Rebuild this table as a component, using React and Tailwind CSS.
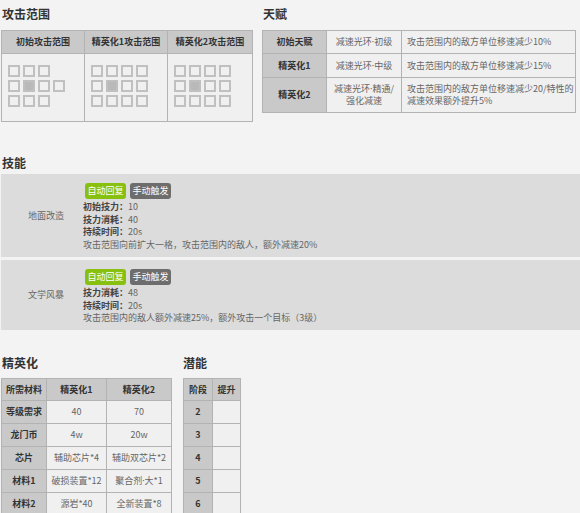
import React from 'react';

const font = { fontFamily: '"Noto Sans CJK SC", "Noto Sans", sans-serif' };

const ranges = [
  { title: '初始攻击范围', rows: ['000 ', '0100', '000 '] },
  { title: '精英化1攻击范围', rows: ['0000', '0100', '0000'] },
  { title: '精英化2攻击范围', rows: ['0000', '0100', '0000'] },
];

const talents = [
  { stage: '初始天赋', name: [['减速光环', '初级']], desc: ['攻击范围内的敌方单位移速减少10%'], h: 'h-[23px]' },
  { stage: '精英化1', name: [['减速光环', '中级']], desc: ['攻击范围内的敌方单位移速减少15%'], h: 'h-[24px]' },
  { stage: '精英化2', name: [['减速光环', '精通/'], ['强化减速']], desc: ['攻击范围内的敌方单位移速减少20/特性的', '减速效果额外提升5%'], h: 'h-[35px]' },
];

const skills = [
  {
    name: '地面改造',
    stats: [['初始技力：', '10'], ['技力消耗：', '40'], ['持续时间：', '20s']],
    desc: '攻击范围向前扩大一格，攻击范围内的敌人，额外减速20%',
    h: 'h-[83px]',
  },
  {
    name: '文学风暴',
    stats: [['技力消耗：', '48'], ['持续时间：', '20s']],
    desc: '攻击范围内的敌人额外减速25%，额外攻击一个目标（3级）',
    h: 'h-[70px]',
  },
];

const elite = [
  ['等级需求', '40', '70'],
  ['龙门币', '4w', '20w'],
  ['芯片', '辅助芯片*4', '辅助双芯片*2'],
  ['材料1', '破损装置*12', ['聚合剂', '大*1']],
  ['材料2', '源岩*40', '全新装置*8'],
];

const cell = 'border border-[#b3b3b3] p-0 text-center align-middle';
const head = `${cell} bg-[#c9c9c9] font-bold text-[#333]`;
const body = `${cell} bg-[#f0f0f0] text-[#666]`;

// narrow latin middle dot, the CJK one renders full width
const Dotted = ({ parts }) =>
  Array.isArray(parts) ? (
    <>
      {parts[0]}
      {parts.length > 1 && <span style={{ fontFamily: '"Noto Sans", sans-serif' }}>·</span>}
      {parts[1]}
    </>
  ) : (
    parts
  );

const Grid = ({ rows }) => (
  <div className="flex flex-col gap-[3px]">
    {rows.map((r, i) => (
      <div key={i} className="flex gap-[3px]">
        {r.split('').map((c, j) =>
          c === ' ' ? (
            <div key={j} className="w-[12px] h-[12px]" />
          ) : (
            <div
              key={j}
              className={`w-[12px] h-[12px] border-2 border-[#c0c0c0] ${c === '1' ? 'bg-[#b9b9b9]' : ''}`}
            />
          )
        )}
      </div>
    ))}
  </div>
);

const Heading = ({ children, className = '' }) => (
  <div className={`text-[12px] leading-[15px] font-bold text-[#333] ${className}`}>{children}</div>
);

export default function App() {
  return (
    <div className="w-[580px] h-[513px] bg-[#f3f3f3] overflow-hidden text-[9px]" style={font}>
      <div className="flex">
        <div className="ml-[1px] w-[251px]">
          <Heading className="h-[30px] pt-[6px] pl-[1px]">攻击范围</Heading>
          <table className="table-fixed border-collapse w-[251px]">
            <colgroup>
              <col className="w-[83px]" />
              <col className="w-[83px]" />
              <col className="w-[85px]" />
            </colgroup>
            <tbody>
              <tr className="h-[23px]">
                {ranges.map(r => (
                  <td key={r.title} className={head}>{r.title}</td>
                ))}
              </tr>
              <tr className="h-[68px]">
                {ranges.map(r => (
                  <td key={r.title} className={`${body} text-left align-top`}>
                    <div className="pl-[6px] pt-[11px]">
                      <Grid rows={r.rows} />
                    </div>
                  </td>
                ))}
              </tr>
            </tbody>
          </table>
        </div>
        <div className="ml-[10px] w-[313px]">
          <Heading className="h-[30px] pt-[6px] pl-[1px]">天赋</Heading>
          <table className="table-fixed border-collapse w-[313px]">
            <colgroup>
              <col className="w-[64px]" />
              <col className="w-[75px]" />
              <col className="w-[174px]" />
            </colgroup>
            <tbody>
              {talents.map(t => (
                <tr key={t.stage} className={t.h}>
                  <td className={head}>{t.stage}</td>
                  <td className={`${body} leading-[12px]`}>
                    {t.name.map((n, i) => (
                      <div key={i} className="whitespace-nowrap"><Dotted parts={n} /></div>
                    ))}
                  </td>
                  <td className={`${body} text-left pl-[5px] leading-[12px]`}>
                    {t.desc.map(d => <div key={d} className="whitespace-nowrap">{d}</div>)}
                  </td>
                </tr>
              ))}
            </tbody>
          </table>
        </div>
      </div>

      <Heading className="mt-[33px] mb-[4px] pl-[2px]">技能</Heading>
      <div className="ml-[1px] flex flex-col gap-[3px]">
        {skills.map(s => (
          <div key={s.name} className={`${s.h} bg-[#dcdcdc] flex`}>
            <div className="w-[82px] pl-[27px] flex items-center text-[#666]">{s.name}</div>
            <div className="pt-[9px]">
              <div className="flex gap-[4px] ml-[2px]">
                <span className="h-[16px] w-[41px] rounded-[3px] bg-[#88c00f] text-white flex items-center justify-center">自动回复</span>
                <span className="h-[16px] w-[41px] rounded-[3px] bg-[#6d6d6d] text-white flex items-center justify-center">手动触发</span>
              </div>
              <div className="mt-[2px] leading-[12.5px] text-[#666]">
                {s.stats.map(([k, v]) => (
                  <div key={k}>
                    <span className="font-bold text-[#444]">{k}</span>
                    {v}
                  </div>
                ))}
                <div>{s.desc}</div>
              </div>
            </div>
          </div>
        ))}
      </div>

      <div className="flex">
        <div className="ml-[1px] w-[170px]">
          <Heading className="mt-[25px] mb-[8px] pl-[1px]">精英化</Heading>
          <table className="table-fixed border-collapse w-[170px]">
            <colgroup>
              <col className="w-[45px]" />
              <col className="w-[60px]" />
              <col className="w-[65px]" />
            </colgroup>
            <tbody>
              <tr className="h-[22px]">
                <td className={head}>所需材料</td>
                <td className={head}>精英化1</td>
                <td className={head}>精英化2</td>
              </tr>
              {elite.map(r => (
                <tr key={r[0]} className="h-[23px]">
                  <td className={head}>{r[0]}</td>
                  <td className={body}>{r[1]}</td>
                  <td className={body}><Dotted parts={r[2]} /></td>
                </tr>
              ))}
            </tbody>
          </table>
        </div>
        <div className="ml-[12px] w-[57px]">
          <Heading className="mt-[25px] mb-[8px]">潜能</Heading>
          <table className="table-fixed border-collapse w-[57px]">
            <colgroup>
              <col className="w-[29px]" />
              <col className="w-[28px]" />
            </colgroup>
            <tbody>
              <tr className="h-[22px]">
                <td className={head}>阶段</td>
                <td className={head}>提升</td>
              </tr>
              {['2', '3', '4', '5', '6'].map(n => (
                <tr key={n} className="h-[23px]">
                  <td className={head}>{n}</td>
                  <td className={body}></td>
                </tr>
              ))}
            </tbody>
          </table>
        </div>
      </div>
    </div>
  );
}
